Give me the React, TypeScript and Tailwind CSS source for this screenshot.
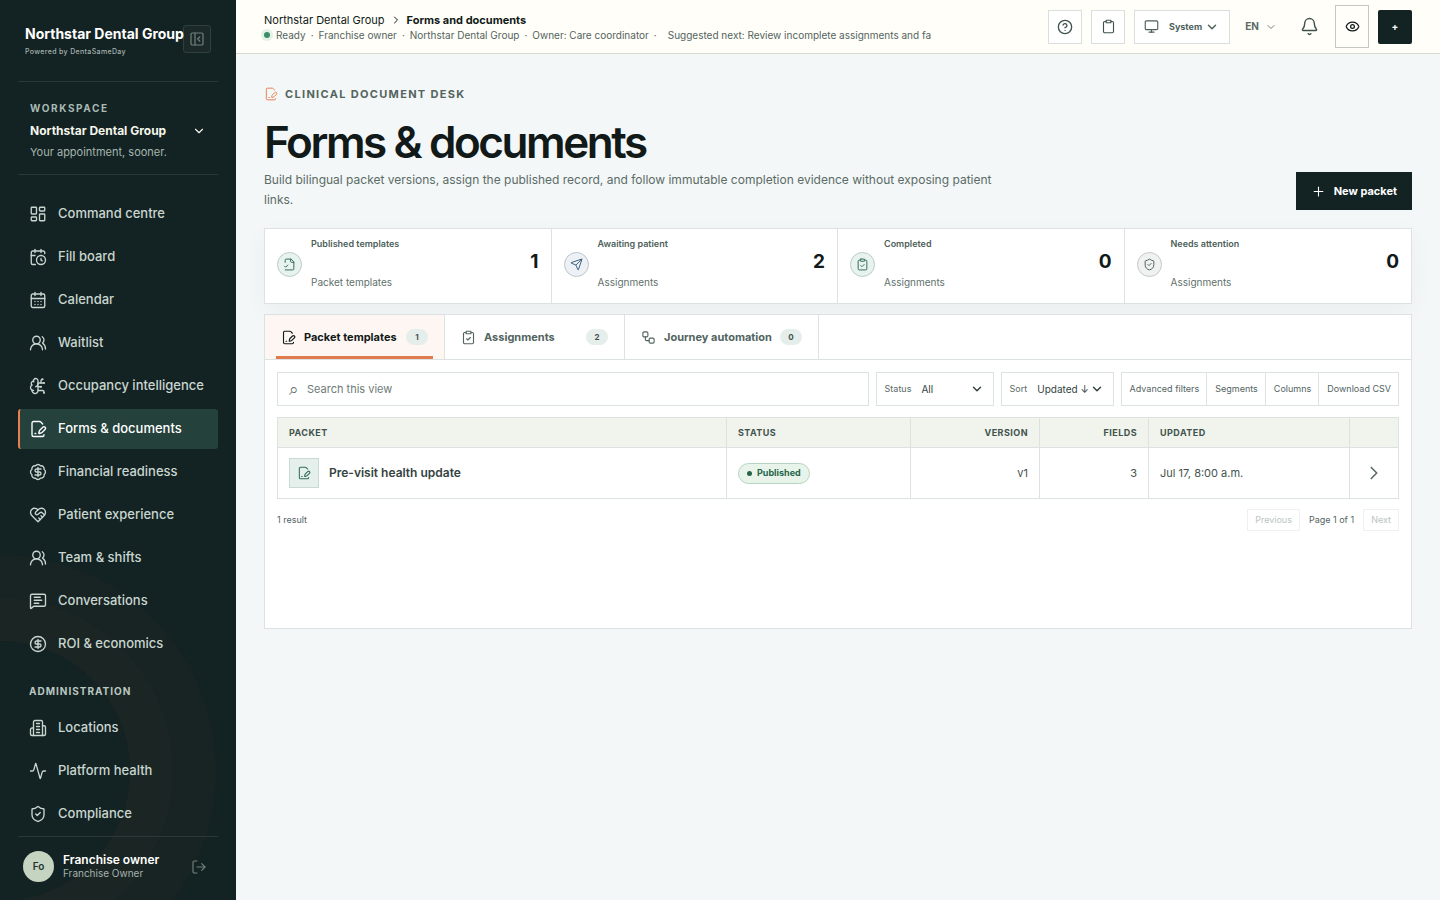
import { useState } from "react";
import type { ReactNode } from "react";
import {
  Activity,
  BadgeDollarSign,
  Bell,
  BrainCircuit,
  CalendarClock,
  CalendarDays,
  ChevronDown,
  ChevronRight,
  CircleDollarSign,
  CircleHelp,
  Clipboard,
  ClipboardCheck,
  Eye,
  FilePenLine,
  LayoutDashboard,
  LogOut,
  MessageSquareText,
  Monitor,
  PanelLeftClose,
  Plus,
  Send,
  ShieldCheck,
  UsersRound,
  Workflow,
} from "lucide-react";

type IconProps = { size?: number; strokeWidth?: number; className?: string };

function Svg({ size = 24, strokeWidth = 2, className, children }: IconProps & { children: ReactNode }) {
  return (
    <svg
      width={size}
      height={size}
      viewBox="0 0 24 24"
      fill="none"
      stroke="currentColor"
      strokeWidth={strokeWidth}
      strokeLinecap="round"
      strokeLinejoin="round"
      className={className}
      aria-hidden="true"
    >
      {children}
    </svg>
  );
}

function BuildingIcon(props: IconProps) {
  return (
    <Svg {...props}>
      <path d="M6 22V4a2 2 0 0 1 2-2h8a2 2 0 0 1 2 2v18Z" />
      <path d="M6 12H4a2 2 0 0 0-2 2v6a2 2 0 0 0 2 2h2" />
      <path d="M18 9h2a2 2 0 0 1 2 2v9a2 2 0 0 1-2 2h-2" />
      <path d="M10 6h4M10 10h4M10 14h4M10 18h4" />
    </Svg>
  );
}

function HeartHandshakeIcon(props: IconProps) {
  return (
    <Svg {...props}>
      <path d="M19 14c1.49-1.46 3-3.21 3-5.5A5.5 5.5 0 0 0 16.5 3c-1.76 0-3 .5-4.5 2-1.5-1.5-2.74-2-4.5-2A5.5 5.5 0 0 0 2 8.5c0 2.3 1.5 4.05 3 5.5l7 7Z" />
      <path d="M12 5 9.04 7.96a2.17 2.17 0 0 0 0 3.08c.82.82 2.13.85 3 .07l2.07-1.9a2.82 2.82 0 0 1 3.79 0l2.96 2.66" />
      <path d="m18 15-2-2" />
      <path d="m15 18-2-2" />
    </Svg>
  );
}

function FileCheckIcon(props: IconProps) {
  return (
    <Svg {...props}>
      <path d="M4 22h14a2 2 0 0 0 2-2V7l-5-5H6a2 2 0 0 0-2 2v4" />
      <path d="M14 2v4a2 2 0 0 0 2 2h4" />
      <path d="m3 15 2 2 4-4" />
    </Svg>
  );
}

const workspaceLinks = [
  { label: "Command centre", icon: LayoutDashboard },
  { label: "Fill board", icon: CalendarClock },
  { label: "Calendar", icon: CalendarDays },
  { label: "Waitlist", icon: UsersRound },
  { label: "Occupancy intelligence", icon: BrainCircuit },
  { label: "Forms & documents", icon: FilePenLine },
  { label: "Financial readiness", icon: BadgeDollarSign },
  { label: "Patient experience", icon: HeartHandshakeIcon },
  { label: "Team & shifts", icon: UsersRound },
  { label: "Conversations", icon: MessageSquareText },
  { label: "ROI & economics", icon: CircleDollarSign },
];

const adminLinks = [
  { label: "Locations", icon: BuildingIcon },
  { label: "Platform health", icon: Activity },
  { label: "Compliance", icon: ShieldCheck },
];

const stats = [
  { label: "Published templates", value: 1, note: "Packet templates", icon: FileCheckIcon, tone: "bg-[#e8f2ee] text-[#2f6b5a] border-[#b9cdc5]" },
  { label: "Awaiting patient", value: 2, note: "Assignments", icon: Send, tone: "bg-[#edf1f6] text-[#3d6080] border-[#bcc5cf]" },
  { label: "Completed", value: 0, note: "Assignments", icon: ClipboardCheck, tone: "bg-[#e8f2ee] text-[#2f6b5a] border-[#b9cdc5]" },
  { label: "Needs attention", value: 0, note: "Assignments", icon: ShieldCheck, tone: "bg-[#f0f2f2] text-[#4d605d] border-[#c6c8c8]" },
];

const tabs = [
  { id: "templates", label: "Packet templates", count: 1, icon: FilePenLine },
  { id: "assignments", label: "Assignments", count: 2, icon: ClipboardCheck },
  { id: "automation", label: "Journey automation", count: 0, icon: Workflow },
];

const tableActions = ["Advanced filters", "Segments", "Columns", "Download CSV"];

function NavItem({ label, icon: Icon }: { label: string; icon: React.ElementType }) {
  const isActive = label === "Forms & documents";

  return (
    <a
      href="#"
      aria-current={isActive ? "page" : undefined}
      className={`flex h-10 shrink-0 items-center gap-[11px] rounded-[3px] border-l-2 pl-[9px] text-[13px] font-medium ${
        isActive ? "border-[#e87f50] bg-[#24413b] text-white" : "border-transparent text-[#c9d6d0]"
      }`}
    >
      <Icon size={18} strokeWidth={1.8} className="shrink-0" />
      {label}
    </a>
  );
}

function Sidebar() {
  return (
    <aside className="sticky top-0 flex h-screen w-[236px] shrink-0 flex-col overflow-hidden bg-[#132222] px-[18px]">
      {/* Decorative rings */}
      <div className="pointer-events-none absolute -bottom-px -left-[130px] size-[260px] rounded-full shadow-[0_0_0_43px_rgba(232,127,80,0.025),0_0_0_86px_rgba(232,127,80,0.025)]" />

      {/* Brand */}
      <div className="relative flex h-[82px] shrink-0 items-start border-b border-[#2a3938] pt-[26px] pl-[7px]">
        <button
          aria-label="Collapse sidebar"
          className="absolute top-[25px] right-[7px] flex size-7 items-center justify-center rounded-[3px] border border-[#2f403d] bg-[#1b2a29] text-[#6f817c]"
        >
          <PanelLeftClose size={16} strokeWidth={1.8} />
        </button>
        <div className="relative whitespace-nowrap">
          <p className="text-[14px] leading-4 font-bold text-white">Northstar Dental Group</p>
          <p className="mt-1 text-[7px] leading-[11px] font-medium tracking-[0.05em] text-[#a5b3af]">Powered by DentaSameDay</p>
        </div>
      </div>

      {/* Workspace switcher */}
      <button className="relative flex h-[93px] shrink-0 flex-col border-b border-[#2a3938] px-3 pt-5 text-left">
        <span className="text-[10px] leading-3 font-bold tracking-[0.16em] text-[#a9bab4]">WORKSPACE</span>
        <span className="mt-2 flex w-full items-center justify-between text-[12px] leading-[18px] font-bold text-[#f4f6ec]">
          Northstar Dental Group
          <ChevronDown size={14} strokeWidth={2} />
        </span>
        <span className="mt-1 text-[11px] leading-4 text-[#a5b5b0]">Your appointment, sooner.</span>
      </button>

      <nav className="relative flex min-h-0 flex-1 flex-col gap-[3px] overflow-hidden pt-[19px]">
        {workspaceLinks.map((item) => (
          <NavItem key={item.label} {...item} />
        ))}
        <p className="mt-4 mb-1.5 pl-[11px] text-[10px] leading-4 font-bold tracking-[0.1em] text-[#b9c7c1]">ADMINISTRATION</p>
        {adminLinks.map((item) => (
          <NavItem key={item.label} {...item} />
        ))}
      </nav>

      {/* Signed in user */}
      <div className="relative flex h-16 shrink-0 items-center border-t border-[#2a3938] pb-1 pl-[5px]">
        <span className="flex size-[31px] items-center justify-center rounded-full bg-[#c5d4c0] text-[10px] font-semibold text-[#22332f]">Fo</span>
        <div className="ml-[9px] flex-1">
          <p className="text-[12px] leading-[14px] font-semibold text-white">Franchise owner</p>
          <p className="text-[10px] leading-[13px] text-[#a5b3af]">Franchise Owner</p>
        </div>
        <button aria-label="Sign out" className="mr-[11px] text-[#6f837d]">
          <LogOut size={16} strokeWidth={1.7} />
        </button>
      </div>
    </aside>
  );
}

function TopBar() {
  const square = "flex size-[34px] items-center justify-center border border-[#d9dfdc] bg-white text-[#3f524e]";

  return (
    <header className="flex h-[54px] shrink-0 items-center justify-between gap-6 border-b border-[#d3dad2] bg-[#fffef8] px-7">
      <div className="min-w-0 whitespace-nowrap">
        <div className="flex items-center text-[11px] leading-4 text-[#111a19]">
          <a href="#">Northstar Dental Group</a>
          <ChevronRight size={12} className="mx-[5px]" />
          <strong className="font-bold">Forms and documents</strong>
        </div>
        <div className="flex items-center gap-[5px] text-[10px] leading-[14px] text-[#53645f]">
          <span className="flex items-center gap-1.5">
            <i className="size-1.5 rounded-full bg-[#3e8b68] shadow-[0_0_0_3px_#e3f1e6]" />
            Ready
          </span>
          <span>·</span>
          <span>Franchise owner</span>
          <span>·</span>
          <span>Northstar Dental Group</span>
          <span>·</span>
          <span>Owner: Care coordinator</span>
          <span>·</span>
          <span className="ml-1.5">Suggested next: Review incomplete assignments and fa</span>
        </div>
      </div>

      <div className="flex shrink-0 items-center gap-[9px]">
        <button aria-label="Help" className={square}>
          <CircleHelp size={16} strokeWidth={2} />
        </button>
        <button aria-label="Tasks" className={square}>
          <Clipboard size={15} strokeWidth={1.8} />
        </button>
        <div className="relative flex h-[34px] w-24 items-center border border-[#d9dfdc] bg-white text-[#4d5f5a]">
          <Monitor size={15} strokeWidth={1.8} className="absolute left-[9px]" />
          <select aria-label="Theme" className="h-full w-full appearance-none bg-transparent pl-[34px] text-[9px] font-bold">
            <option>System</option>
          </select>
          <ChevronDown size={14} strokeWidth={2.5} className="pointer-events-none absolute right-[10px]" />
        </div>
        <button aria-label="Language" className="flex h-[34px] w-11 items-center justify-center gap-1.5 text-[10px] font-bold text-[#5b6b66]">
          EN
          <ChevronDown size={12} strokeWidth={1.7} />
        </button>
        <button aria-label="Notifications" className="flex size-[34px] items-center justify-center text-[#3f524e]">
          <Bell size={19} strokeWidth={1.8} />
        </button>
        <button aria-label="Preview" className="flex h-[43px] w-[34px] items-center justify-center border border-[#c3c8c5] text-[#111a19]">
          <Eye size={15} strokeWidth={2} />
        </button>
        <button aria-label="Create" className="flex size-[34px] items-center justify-center rounded-[2px] bg-[#132222] text-[10px] font-bold text-white">
          +
        </button>
      </div>
    </header>
  );
}

function StatStrip() {
  return (
    <section className="mt-[18px] grid grid-cols-4 border border-[#dce2e1] bg-white shadow-[0_8px_24px_rgba(19,34,34,0.04)]">
      {stats.map(({ label, value, note, icon: Icon, tone }) => (
        <div key={label} className="flex h-[74px] items-center border-r border-[#dce2e1] px-3 last:border-r-0">
          <span className={`mt-[-3px] flex size-[25px] shrink-0 items-center justify-center rounded-full border ${tone}`}>
            <Icon size={13} strokeWidth={1.8} />
          </span>
          <div className="ml-[9px] flex h-14 flex-1 flex-col justify-between pb-1">
            <p className="text-[9px] leading-3 font-semibold text-[#4d5f5a]">{label}</p>
            <p className="text-[10px] leading-4 text-[#61716c]">{note}</p>
          </div>
          <strong className="mb-2 text-[19px] leading-6 font-bold text-[#111a19]">{value}</strong>
        </div>
      ))}
    </section>
  );
}

function FilterBar() {
  return (
    <div className="flex h-[34px] items-stretch gap-[7px]">
      <label className="flex flex-1 items-center gap-2 border border-[#dce2e1] px-[11px] text-[#61716c]">
        <span className="text-[17px] leading-4" aria-hidden="true">⌕</span>
        <input
          type="search"
          aria-label="Search this view"
          placeholder="Search this view"
          className="min-w-0 flex-1 bg-transparent text-[11px] outline-none placeholder:text-[#6d7a77]"
        />
      </label>
      <label className="relative flex w-[118px] items-center gap-2.5 border border-[#dce2e1] pl-2 text-[9px] text-[#5b6b66]">
        Status
        <select className="h-full flex-1 appearance-none bg-transparent text-[10px] text-[#34433f]">
          <option>All</option>
        </select>
        <ChevronDown size={14} strokeWidth={2.5} className="pointer-events-none absolute right-[9px] text-[#34433f]" />
      </label>
      <label className="relative flex w-[113px] items-center gap-2.5 border border-[#dce2e1] pl-2 text-[9px] text-[#5b6b66]">
        Sort
        <select className="h-full flex-1 appearance-none bg-transparent text-[10px] text-[#34433f]">
          <option>Updated ↓</option>
        </select>
        <ChevronDown size={14} strokeWidth={2.5} className="pointer-events-none absolute right-[9px] text-[#34433f]" />
      </label>
      <div className="flex border border-[#dce2e1]">
        {tableActions.map((action) => (
          <button key={action} className="border-r border-[#dce2e1] pr-[7px] pl-2 text-[9px] text-[#53645f] last:border-r-0">
            {action}
          </button>
        ))}
      </div>
    </div>
  );
}

function PacketTable() {
  const th = "border border-[#dce2e1] px-[11px] text-[9px] font-bold tracking-[0.05em] text-[#42524e]";
  const td = "border border-[#dce2e1] px-[11px] text-[11px] text-[#42524e]";

  return (
    <table className="mt-[11px] w-full table-fixed border-collapse">
      <colgroup>
        <col />
        <col className="w-[184px]" />
        <col className="w-[129px]" />
        <col className="w-[109px]" />
        <col className="w-[201px]" />
        <col className="w-[49px]" />
      </colgroup>
      <thead>
        <tr className="h-[30px] bg-[#f1f4ed]">
          <th className={`${th} text-left`}>PACKET</th>
          <th className={`${th} text-left`}>STATUS</th>
          <th className={`${th} text-right`}>VERSION</th>
          <th className={`${th} text-right`}>FIELDS</th>
          <th className={`${th} text-left`}>UPDATED</th>
          <th className={th} aria-label="Open" />
        </tr>
      </thead>
      <tbody>
        <tr className="h-[51px]">
          <td className={td}>
            <div className="flex items-center gap-2.5">
              <span className="flex size-[30px] items-center justify-center border border-[#c9dad5] bg-[#e5f0ed] text-[#2f6b5a]">
                <FilePenLine size={14} strokeWidth={1.8} />
              </span>
              <span className="text-[12px] font-semibold text-[#34433f]">Pre-visit health update</span>
            </div>
          </td>
          <td className={td}>
            <span className="inline-flex h-[21px] items-center gap-[5px] rounded-full border border-[#b5d4c4] bg-[#e8f4ea] px-2 align-middle text-[9px] font-bold text-[#256549]">
              <i className="size-[5px] rounded-full bg-[#256549]" />
              Published
            </span>
          </td>
          <td className={`${td} text-right`}>v1</td>
          <td className={`${td} text-right`}>3</td>
          <td className={td}>Jul 17, 8:00 a.m.</td>
          <td className={td}>
            <button aria-label="Open packet" className="mx-auto block text-[#5b6b66]">
              <ChevronRight size={22} strokeWidth={1.8} />
            </button>
          </td>
        </tr>
      </tbody>
    </table>
  );
}

export default function App() {
  const [activeTab, setActiveTab] = useState("templates");

  return (
    <div className="flex min-h-screen bg-[#f3f7f8] font-[Inter,sans-serif] text-[#111a19]">
      <Sidebar />
      <div className="flex min-w-0 flex-1 flex-col">
        <TopBar />
        <main className="px-7 pt-8 pb-10">
          <div className="flex items-end justify-between">
            <div>
              <p className="flex items-center gap-[7px] text-[11px] leading-4 font-bold tracking-[0.12em] text-[#53645f]">
                <FilePenLine size={14} strokeWidth={1.7} className="text-[#e87f50]" />
                CLINICAL DOCUMENT DESK
              </p>
              <h1 className="mt-4 text-[44px] leading-[48px] font-semibold tracking-[-0.055em]">Forms &amp; documents</h1>
              <p className="mt-1 max-w-[760px] text-[12px] leading-5 text-[#5b6b66]">
                Build bilingual packet versions, assign the published record, and follow immutable completion evidence without exposing patient links.
              </p>
            </div>
            <button className="flex h-[38px] items-center gap-2 bg-[#132222] px-[15px] text-[11px] font-bold text-white">
              <Plus size={15} strokeWidth={1.7} />
              New packet
            </button>
          </div>

          <StatStrip />

          <section className="mt-2.5 min-h-[315px] border border-[#dce2e1] bg-white">
            <div role="tablist" className="flex h-[45px] border-b border-[#dce2e1]">
              {tabs.map(({ id, label, count, icon: Icon }) => {
                const isActive = id === activeTab;

                return (
                  <button
                    key={id}
                    role="tab"
                    aria-selected={isActive}
                    onClick={() => setActiveTab(id)}
                    className={`relative flex min-w-[180px] items-center gap-2 border-r border-[#dce2e1] px-4 text-[11px] font-bold ${
                      isActive ? "bg-[#fef6f2] text-[#111a19]" : "text-[#53645f]"
                    }`}
                  >
                    <Icon size={15} strokeWidth={1.8} />
                    {label}
                    <span className="ml-auto flex h-4 w-[22px] items-center justify-center rounded-full bg-[#e6eeec] text-[8px] text-[#42524e]">{count}</span>
                    {isActive && <span className="absolute right-[11px] bottom-0 left-[11px] h-[3px] bg-[#e07b50]" />}
                  </button>
                );
              })}
            </div>

            <div className="p-3">
              <FilterBar />
              <PacketTable />
              <div className="mt-2.5 flex items-center justify-between text-[9px] text-[#53645f]">
                <span>1 result</span>
                <div className="flex items-center gap-[9px]">
                  <button disabled className="h-[22px] border border-[#eef1f0] px-[7px] text-[#bcc4c1]">Previous</button>
                  <span>Page 1 of 1</span>
                  <button disabled className="h-[22px] border border-[#eef1f0] px-[7px] text-[#bcc4c1]">Next</button>
                </div>
              </div>
            </div>
          </section>
        </main>
      </div>
    </div>
  );
}
